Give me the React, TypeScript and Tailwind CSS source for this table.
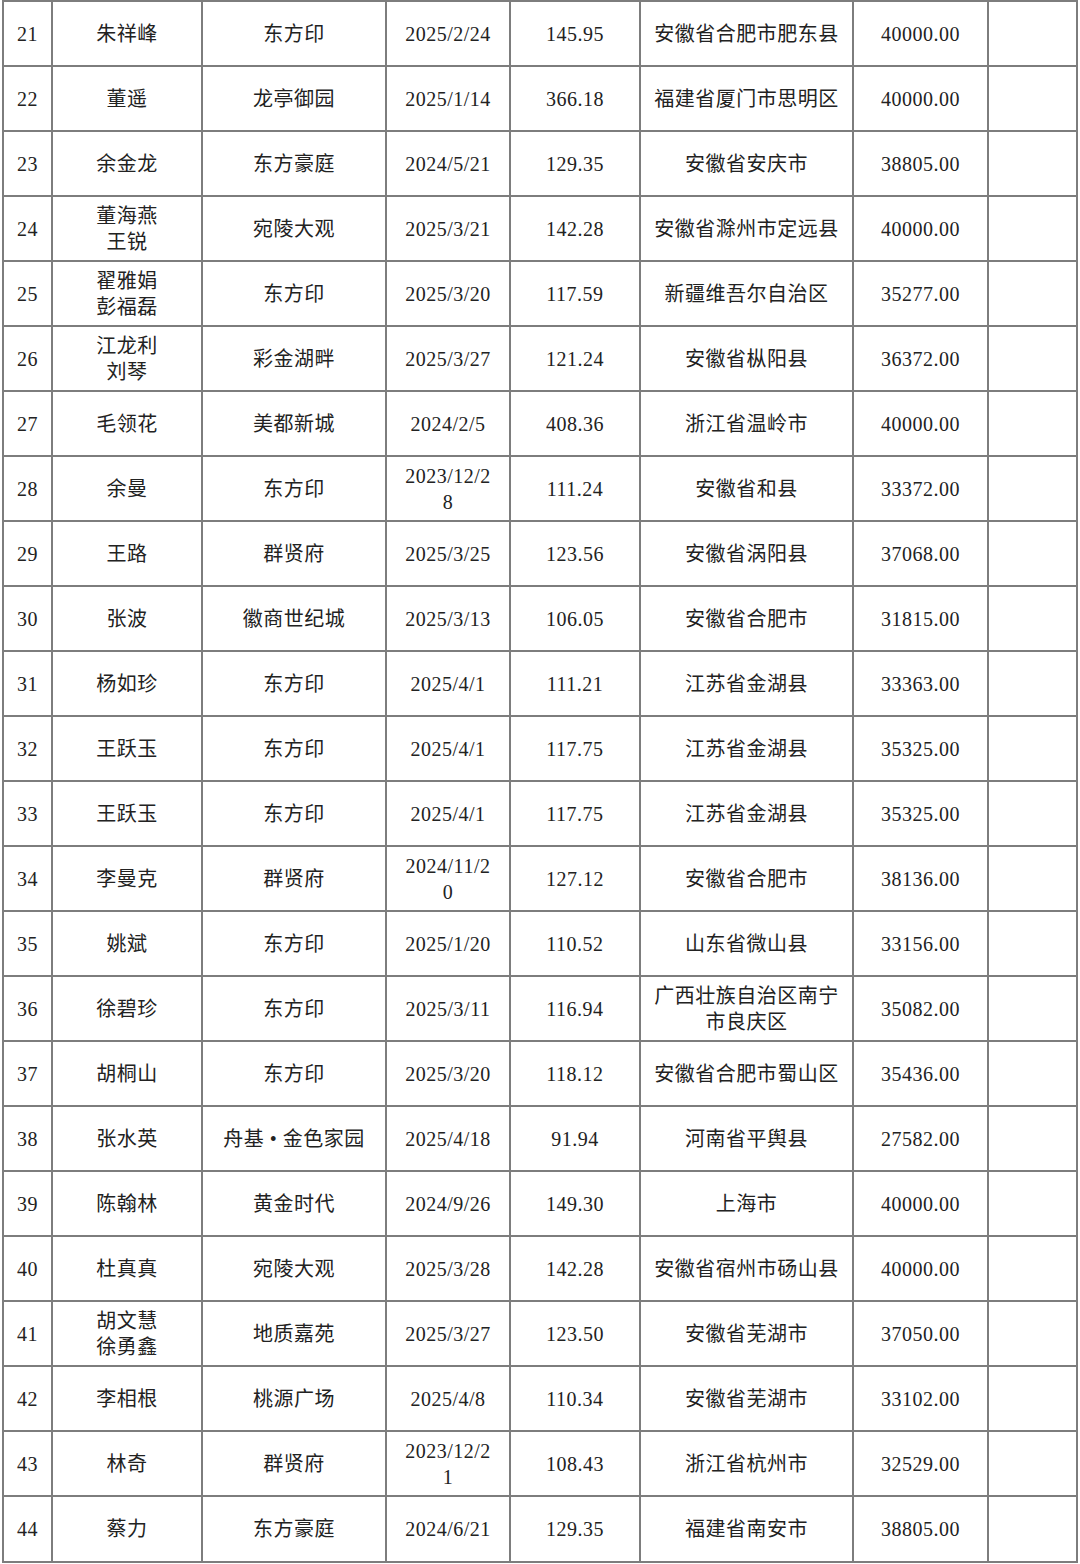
const rows: string[][] = [
  ['21', '朱祥峰', '东方印', '2025/2/24', '145.95', '安徽省合肥市肥东县', '40000.00'],
  ['22', '董遥', '龙亭御园', '2025/1/14', '366.18', '福建省厦门市思明区', '40000.00'],
  ['23', '余金龙', '东方豪庭', '2024/5/21', '129.35', '安徽省安庆市', '38805.00'],
  ['24', '董海燕\n王锐', '宛陵大观', '2025/3/21', '142.28', '安徽省滁州市定远县', '40000.00'],
  ['25', '翟雅娟\n彭福磊', '东方印', '2025/3/20', '117.59', '新疆维吾尔自治区', '35277.00'],
  ['26', '江龙利\n刘琴', '彩金湖畔', '2025/3/27', '121.24', '安徽省枞阳县', '36372.00'],
  ['27', '毛领花', '美都新城', '2024/2/5', '408.36', '浙江省温岭市', '40000.00'],
  ['28', '余曼', '东方印', '2023/12/2\n8', '111.24', '安徽省和县', '33372.00'],
  ['29', '王路', '群贤府', '2025/3/25', '123.56', '安徽省涡阳县', '37068.00'],
  ['30', '张波', '徽商世纪城', '2025/3/13', '106.05', '安徽省合肥市', '31815.00'],
  ['31', '杨如珍', '东方印', '2025/4/1', '111.21', '江苏省金湖县', '33363.00'],
  ['32', '王跃玉', '东方印', '2025/4/1', '117.75', '江苏省金湖县', '35325.00'],
  ['33', '王跃玉', '东方印', '2025/4/1', '117.75', '江苏省金湖县', '35325.00'],
  ['34', '李曼克', '群贤府', '2024/11/2\n0', '127.12', '安徽省合肥市', '38136.00'],
  ['35', '姚斌', '东方印', '2025/1/20', '110.52', '山东省微山县', '33156.00'],
  ['36', '徐碧珍', '东方印', '2025/3/11', '116.94', '广西壮族自治区南宁\n市良庆区', '35082.00'],
  ['37', '胡桐山', '东方印', '2025/3/20', '118.12', '安徽省合肥市蜀山区', '35436.00'],
  ['38', '张水英', '舟基 • 金色家园', '2025/4/18', '91.94', '河南省平舆县', '27582.00'],
  ['39', '陈翰林', '黄金时代', '2024/9/26', '149.30', '上海市', '40000.00'],
  ['40', '杜真真', '宛陵大观', '2025/3/28', '142.28', '安徽省宿州市砀山县', '40000.00'],
  ['41', '胡文慧\n徐勇鑫', '地质嘉苑', '2025/3/27', '123.50', '安徽省芜湖市', '37050.00'],
  ['42', '李相根', '桃源广场', '2025/4/8', '110.34', '安徽省芜湖市', '33102.00'],
  ['43', '林奇', '群贤府', '2023/12/2\n1', '108.43', '浙江省杭州市', '32529.00'],
  ['44', '蔡力', '东方豪庭', '2024/6/21', '129.35', '福建省南安市', '38805.00'],
];

export default function App() {
  return (
    <div
      className="min-h-screen bg-white text-[#222] text-[20px] leading-[26px]"
      style={{ fontFamily: '"Liberation Serif", "Noto Sans CJK SC", serif' }}
    >
      <div className="ml-[2px] grid w-[1076px] grid-cols-[47px_148px_182px_122px_128px_211px_133px_87px] gap-[2px] bg-[#7d7d7d] p-[2px]">
        {rows.map((row, i) => {
          const last = i === rows.length - 1;
          return [...row, ''].map((cell, j) => (
            <div
              key={`${i}-${j}`}
              className={`flex items-center justify-center bg-white text-center whitespace-pre-line tracking-[0.5px] ${
                last ? 'h-[64px]' : 'h-[63px]'
              }`}
            >
              {cell}
            </div>
          ));
        })}
      </div>
    </div>
  );
}
